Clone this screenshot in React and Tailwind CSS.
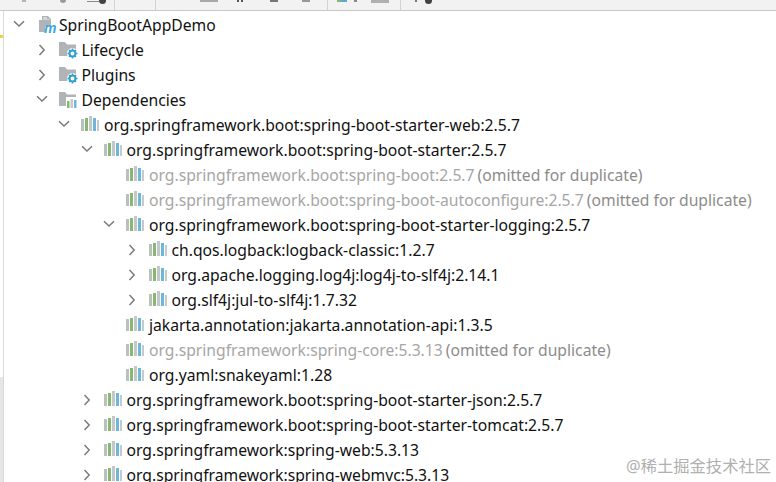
const rows = [
  { depth: 0, arrow: 'down', icon: 'module', name: 'SpringBootAppDemo' },
  { depth: 1, arrow: 'right', icon: 'gear', name: 'Lifecycle' },
  { depth: 1, arrow: 'right', icon: 'gear', name: 'Plugins' },
  { depth: 1, arrow: 'down', icon: 'deps', name: 'Dependencies' },
  { depth: 2, arrow: 'down', icon: 'lib', name: 'org.springframework.boot:spring-boot-starter-web:2.5.7' },
  { depth: 3, arrow: 'down', icon: 'lib', name: 'org.springframework.boot:spring-boot-starter:2.5.7' },
  { depth: 4, icon: 'lib', name: 'org.springframework.boot:spring-boot:2.5.7', omitted: true },
  { depth: 4, icon: 'lib', name: 'org.springframework.boot:spring-boot-autoconfigure:2.5.7', omitted: true },
  { depth: 4, arrow: 'down', icon: 'lib', name: 'org.springframework.boot:spring-boot-starter-logging:2.5.7' },
  { depth: 5, arrow: 'right', icon: 'lib', name: 'ch.qos.logback:logback-classic:1.2.7' },
  { depth: 5, arrow: 'right', icon: 'lib', name: 'org.apache.logging.log4j:log4j-to-slf4j:2.14.1' },
  { depth: 5, arrow: 'right', icon: 'lib', name: 'org.slf4j:jul-to-slf4j:1.7.32' },
  { depth: 4, icon: 'lib', name: 'jakarta.annotation:jakarta.annotation-api:1.3.5' },
  { depth: 4, icon: 'lib', name: 'org.springframework:spring-core:5.3.13', omitted: true },
  { depth: 4, icon: 'lib', name: 'org.yaml:snakeyaml:1.28' },
  { depth: 3, arrow: 'right', icon: 'lib', name: 'org.springframework.boot:spring-boot-starter-json:2.5.7' },
  { depth: 3, arrow: 'right', icon: 'lib', name: 'org.springframework.boot:spring-boot-starter-tomcat:2.5.7' },
  { depth: 3, arrow: 'right', icon: 'lib', name: 'org.springframework:spring-web:5.3.13' },
  { depth: 3, arrow: 'right', icon: 'lib', name: 'org.springframework:spring-webmvc:5.3.13' },
];

const Chevron = ({ dir }) => (
  <svg width="12" height="12" viewBox="0 0 12 12" fill="none" stroke="#777" strokeWidth="1.4">
    {dir === 'down' ? <path d="M1 2.2 6 7l5-4.8" /> : <path d="M3.5 1 8.2 6l-4.7 5" />}
  </svg>
);

const Folder = () => <path d="M0 1h6l2 2.5h9V15H0z" fill="#b0b4b7" />;

const NodeIcon = ({ type }) => {
  if (type === 'lib') {
    return (
      <svg className="-mt-[2px]" width="18" height="15" viewBox="0 0 18 15">
        <rect x="0" y="3" width="3" height="12" fill="#b9c1bd" />
        <rect x="4" y="2" width="3" height="13" fill="#86b872" />
        <rect x="8" y="0" width="3" height="15" fill="#c4c8ca" />
        <rect x="12" y="2" width="3" height="13" fill="#6db8da" />
        <rect x="16" y="4" width="2" height="11" fill="#c2cbd0" />
      </svg>
    );
  }
  if (type === 'module') {
    return (
      <svg className="ml-[3px]" width="18" height="18" viewBox="0 0 18 18">
        <path d="M0 4h3V0h6l3 3v7H6v6H0z" fill="#b0b4b7" />
        <path d="M4 1h4v2h3v1H4z" fill="#fff" opacity="0.45" />
        <text x="5" y="16.5" fontSize="14" fontWeight="700" fontStyle="italic" fill="#38a9d8" fontFamily="Liberation Sans, sans-serif">m</text>
      </svg>
    );
  }
  if (type === 'gear') {
    return (
      <svg width="19" height="18" viewBox="0 0 19 18">
        <Folder />
        <circle cx="13.5" cy="12.5" r="5.5" fill="#fff" />
        <circle cx="13.5" cy="12.5" r="3" fill="none" stroke="#2f9fd0" strokeWidth="2" />
        <path d="M13.5 7.5v10M8.5 12.5h10M10 9l7 7M17 9l-7 7" stroke="#2f9fd0" strokeWidth="1.4" strokeDasharray="1.6 7" />
      </svg>
    );
  }
  return (
    <svg width="19" height="18" viewBox="0 0 19 18">
      <Folder />
      <rect x="7" y="6" width="12" height="12" fill="#fff" />
      <rect x="8" y="10" width="2.5" height="7" fill="#86b872" />
      <rect x="11.5" y="8" width="2.5" height="9" fill="#c4c8ca" />
      <rect x="15" y="9" width="2.5" height="8" fill="#6db8da" />
    </svg>
  );
};

const Row = ({ row }) => (
  <div className="flex h-[25px] items-center whitespace-nowrap" style={{ paddingLeft: 13 + row.depth * 22.5 }}>
    <span className="flex w-[23px] shrink-0 items-center">{row.arrow && <Chevron dir={row.arrow} />}</span>
    <span className="flex w-[23px] shrink-0 items-center">
      <NodeIcon type={row.icon} />
    </span>
    <span className={row.omitted ? 'mt-[2px] text-[#a6a6a6]' : 'mt-[2px] text-[#111]'}>{row.name}</span>
    {row.omitted && <span className="ml-[3px] mt-[2px] text-[#8c8c8c]">(omitted for duplicate)</span>}
  </div>
);

// only the bottom edge of the toolbar is visible in the picture
const Toolbar = () => (
  <div className="flex h-[11px] shrink-0 items-start border-b border-[#c9c9c9] bg-[#f2f2f2]">
    <div className="ml-[22px] h-[2px] w-[4px] bg-[#b5b5b5]" />
    <div className="ml-[34px] h-[3px] w-[6px] rounded-b-full bg-[#9a9a9a]" />
    <div className="ml-[21px] mt-[1px] h-[1px] w-[12px] bg-[#8a8a8a]" />
    <div className="h-[4px] w-[7px] rounded-b-full bg-[#444]" />
    <div className="ml-[8px] h-[10px] w-px bg-[#d2d2d2]" />
    <div className="ml-[40px] h-[10px] w-px bg-[#d2d2d2]" />
    <div className="ml-[44px] h-[2px] w-[18px] bg-[#a8a8a8]" />
    <div className="ml-[19px] h-[2px] w-[2px] bg-[#555]" />
    <div className="ml-[2px] h-[2px] w-[2px] bg-[#555]" />
    <div className="ml-[27px] h-[2px] w-[8px] bg-[#777]" />
    <div className="ml-[24px] h-[2px] w-[8px] bg-[#999]" />
    <div className="ml-[17px] h-[10px] w-px bg-[#d2d2d2]" />
    <div className="ml-[9px] h-[2px] w-[4px] bg-[#86b872]" />
    <div className="h-[2px] w-[6px] bg-[#5aa9d6]" />
    <div className="ml-[7px] h-[2px] w-[3px] bg-[#888]" />
    <div className="ml-[14px] h-[3px] w-[18px] bg-[#b0b0b0]" />
    <div className="ml-[11px] h-[10px] w-px bg-[#d2d2d2]" />
    <div className="ml-[14px] h-[2px] w-[2px] bg-[#777]" />
    <div className="ml-[8px] h-[4px] w-[7px] rounded-b-full bg-[#444]" />
  </div>
);

export default function App() {
  return (
    <div className="relative flex h-[482px] w-[776px] flex-col overflow-hidden bg-white font-['Noto_Sans','Noto_Sans_CJK_SC',sans-serif] text-[15.7px]">
      <Toolbar />
      <div className="flex min-h-0 flex-1">
        <div className="flex w-[4px] shrink-0 flex-col border-r border-[#d9d9d9]">
          <div className="mt-[24px] h-[3px] bg-[#f2d23c]" />
          <div className="h-[339px]" />
          <div className="flex-1 bg-[#e6e6e6]" />
        </div>
        <div className="-ml-[4px] min-w-0 flex-1 pt-[1px]">
          {rows.map((row) => (
            <Row key={row.name} row={row} />
          ))}
        </div>
      </div>
      <span className="absolute bottom-[4px] right-[5px] text-[16.3px] text-[#b0b0b0]">@稀土掘金技术社区</span>
    </div>
  );
}
